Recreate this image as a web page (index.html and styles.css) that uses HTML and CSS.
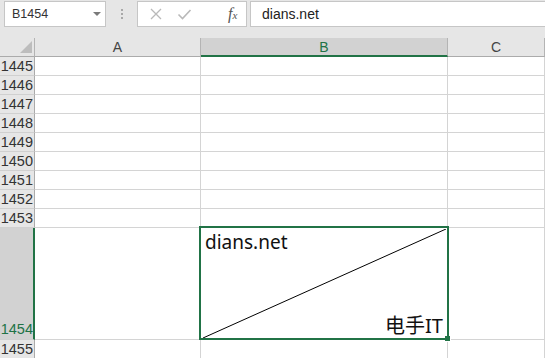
FILE: index.html
```html
<!DOCTYPE html>
<html lang="zh">
<head>
    <meta charset="UTF-8">
    <title>Excel - 斜线表头</title>
    <link rel="stylesheet" href="styles.css">
</head>
<body>
    <div class="toolbar">
        <div class="name-box">
            <span>B1454</span>
            <svg class="caret" width="8" height="5" viewBox="0 0 8 5"><path d="M0 0h8L4 4z" fill="#7a7a7a"/></svg>
        </div>
        <div class="grip"><i></i><i></i><i></i></div>
        <div class="fx-buttons">
            <svg width="14" height="14" viewBox="0 0 14 14"><path d="M2 2l10 10M12 2L2 12" stroke="#b9b9b9" stroke-width="1.3"/></svg>
            <svg width="15" height="14" viewBox="0 0 15 14"><path d="M1.5 7.5l4 4L13.5 3" stroke="#b9b9b9" stroke-width="1.6" fill="none"/></svg>
            <span class="fx">f<sub>x</sub></span>
        </div>
        <div class="formula">dians.net</div>
    </div>

    <div class="sheet">
        <div class="corner"><svg width="12" height="12" viewBox="0 0 12 12"><path d="M12 0v12H0z" fill="#bdbdbd"/></svg></div>
        <div class="col-head">A</div>
        <div class="col-head active">B</div>
        <div class="col-head">C</div>

        <div class="row-head">1445</div><div class="cell"></div><div class="cell"></div><div class="cell"></div>
        <div class="row-head">1446</div><div class="cell"></div><div class="cell"></div><div class="cell"></div>
        <div class="row-head">1447</div><div class="cell"></div><div class="cell"></div><div class="cell"></div>
        <div class="row-head">1448</div><div class="cell"></div><div class="cell"></div><div class="cell"></div>
        <div class="row-head">1449</div><div class="cell"></div><div class="cell"></div><div class="cell"></div>
        <div class="row-head">1450</div><div class="cell"></div><div class="cell"></div><div class="cell"></div>
        <div class="row-head">1451</div><div class="cell"></div><div class="cell"></div><div class="cell"></div>
        <div class="row-head">1452</div><div class="cell"></div><div class="cell"></div><div class="cell"></div>
        <div class="row-head">1453</div><div class="cell"></div><div class="cell"></div><div class="cell"></div>

        <div class="row-head active">1454</div>
        <div class="cell"></div>
        <div class="cell split">
            <span class="top-text">dians.net</span>
            <span class="bottom-text">电手IT</span>
            <div class="selection">
                <svg class="diag" preserveAspectRatio="none" viewBox="0 0 100 100"><line x1="0" y1="100" x2="100" y2="0" stroke="#000" stroke-width="1" vector-effect="non-scaling-stroke"/></svg>
                <div class="handle"></div>
            </div>
        </div>
        <div class="cell"></div>

        <div class="row-head">1455</div><div class="cell"></div><div class="cell"></div><div class="cell"></div>
    </div>
</body>
</html>
```

FILE: styles.css
```css
* {
    margin: 0;
    padding: 0;
    box-sizing: border-box;
}

body {
    font-family: "Liberation Sans", "Noto Sans CJK SC", sans-serif;
    background: #e6e6e6;
    width: 545px;
    height: 358px;
    overflow: hidden;
    color: #222;
}

/* formula bar */
.toolbar {
    display: flex;
    align-items: center;
    height: 38px;
    padding: 1px 0 11px 4px;
}

.name-box {
    display: flex;
    align-items: center;
    justify-content: space-between;
    width: 102px;
    height: 26px;
    background: #fff;
    border: 1px solid #c6c6c6;
    padding: 0 4px 0 7px;
    font-size: 12.5px;
    color: #333;
}

.grip {
    display: flex;
    flex-direction: column;
    gap: 2px;
    width: 31px;
    align-items: center;
}

.grip i {
    width: 2px;
    height: 2px;
    background: #a8a8a8;
}

.fx-buttons {
    display: flex;
    align-items: center;
    width: 110px;
    height: 26px;
    background: #fff;
    border: 1px solid #c6c6c6;
    padding: 0 0 0 11px;
    gap: 14px;
}

.fx {
    margin-left: 22px;
    font-family: "Liberation Serif", serif;
    font-style: italic;
    font-size: 16px;
    color: #555;
}

.fx sub {
    font-size: 11px;
    vertical-align: 0;
}

.formula {
    flex: 1;
    height: 26px;
    margin-left: 3px;
    background: #fff;
    border: 1px solid #c6c6c6;
    border-right: none;
    padding: 4px 0 0 11px;
    font-size: 14px;
    color: #222;
}

/* grid */
.sheet {
    display: grid;
    grid-template-columns: 35px 166px 247px 1fr;
    grid-template-rows: 19px repeat(9, 19px) 112px 19px;
    background: #fff;
}

.corner {
    display: flex;
    justify-content: flex-end;
    align-items: flex-end;
    padding: 0 2px 3px 0;
    background: #e6e6e6;
    border-right: 1px solid #b4b4b4;
    border-bottom: 1px solid #ababab;
}

.col-head {
    background: #e6e6e6;
    border-right: 1px solid #b4b4b4;
    border-bottom: 1px solid #ababab;
    text-align: center;
    font-size: 14px;
    line-height: 18px;
    color: #444;
}

.col-head.active {
    background: #d2d2d2;
    color: #217346;
    border-bottom: 2px solid #217346;
}

.row-head {
    background: #e6e6e6;
    border-right: 1px solid #ababab;
    border-bottom: 1px solid #d0d0d0;
    text-align: right;
    padding-right: 1px;
    font-size: 14.5px;
    line-height: 19px;
    color: #333;
}

.row-head.active {
    display: flex;
    align-items: flex-end;
    justify-content: flex-end;
    background: #d2d2d2;
    color: #217346;
    border-right: 2px solid #217346;
    padding-right: 0;
}

.cell {
    border-right: 1px solid #d4d4d4;
    border-bottom: 1px solid #d4d4d4;
}

.split {
    position: relative;
    display: flex;
    flex-direction: column;
    justify-content: space-between;
    padding: 3px 4px 2px 4px;
    font-family: "Noto Sans", "Noto Sans CJK SC", sans-serif;
    font-size: 19px;
    line-height: 22px;
    color: #111;
}

.bottom-text {
    align-self: flex-end;
    font-size: 20px;
}

.selection {
    position: absolute;
    left: -2px;
    top: -2px;
    width: 250px;
    height: 114px;
    border: 2px solid #217346;
}

.diag {
    position: absolute;
    left: 2px;
    top: 1px;
    width: 243px;
    height: 109px;
}

.handle {
    position: absolute;
    right: -4px;
    bottom: -4px;
    width: 6px;
    height: 6px;
    background: #217346;
    border: 1px solid #fff;
    border-top: none;
    border-left: none;
}
```
